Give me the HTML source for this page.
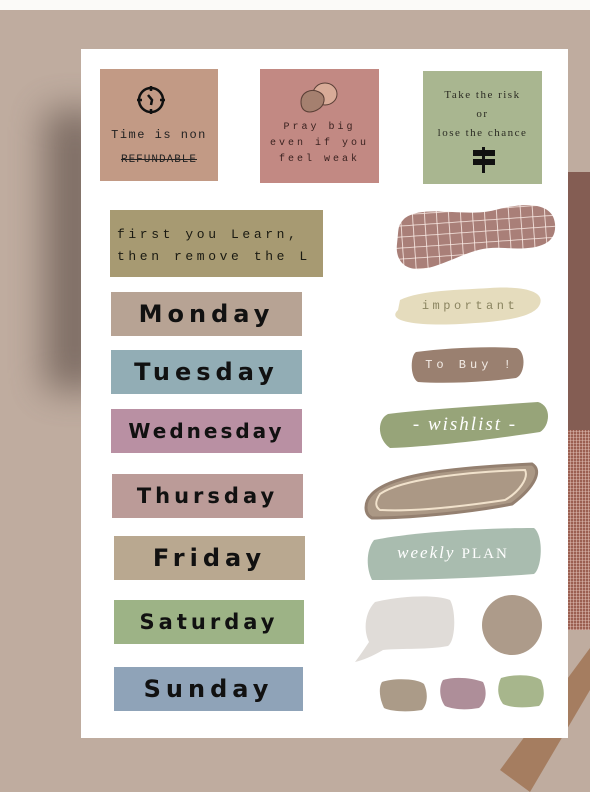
<!DOCTYPE html>
<html><head><meta charset="utf-8"><style>
*{margin:0;padding:0;box-sizing:border-box}
body{width:590px;height:792px;overflow:hidden;background:#bfac9f;position:relative;font-family:"Liberation Sans",sans-serif}
.abs{position:absolute}
.day{position:absolute;height:44px;font-weight:900;font-size:24px;letter-spacing:5px;color:#111;display:flex;align-items:center;justify-content:center;font-family:"DejaVu Sans","Liberation Sans",sans-serif}
.hand{font-family:"Liberation Mono",monospace}
</style></head><body>
<div class="abs" style="left:0;top:0;width:590px;height:10px;background:#fbfaf8"></div>
<div class="abs" style="left:45px;top:110px;width:60px;height:280px;background:#6e5e56;filter:blur(18px);opacity:.8"></div>
<div class="abs" style="left:567px;top:172px;width:23px;height:260px;background:#845d53"></div>
<div class="abs" style="left:567px;top:430px;width:23px;height:200px;background:#9b5f51;background-image:repeating-linear-gradient(90deg,rgba(230,200,190,.5) 0 1px,transparent 1px 3px),repeating-linear-gradient(0deg,rgba(230,200,190,.4) 0 1px,transparent 1px 3px)"></div>
<svg class="abs" style="left:0;top:0" width="590" height="792"><polygon points="590,648 590,690 530,792 500,770" fill="#a57d60"/></svg>
<div class="abs" style="left:81px;top:49px;width:487px;height:689px;background:#fff"></div>

<div class="abs" style="left:100px;top:69px;width:118px;height:112px;background:#c29a85"></div>
<svg class="abs" style="left:135px;top:84px" width="32" height="32"><circle cx="16" cy="16" r="12" fill="none" stroke="#111" stroke-width="2.5"/><path d="M16 2v5M16 25v5M2 16h5M25 16h5M13 11l4 5-1 5" stroke="#111" stroke-width="2.5" fill="none"/></svg>
<div class="abs hand" style="left:100px;top:128px;width:118px;text-align:center;font-size:12px;letter-spacing:1.5px;color:#222">Time is non</div>
<div class="abs hand" style="left:100px;top:154px;width:118px;text-align:center;font-size:11px;letter-spacing:1px;color:#222;text-decoration:line-through">REFUNDABLE</div>

<div class="abs" style="left:260px;top:69px;width:119px;height:114px;background:#c28983"></div>
<svg class="abs" style="left:295px;top:80px" width="48" height="40"><ellipse cx="30" cy="14" rx="12" ry="11" fill="#d8ab98" stroke="#5a3f36"/><path d="M6 22c0-10 10-14 18-10s6 14-2 18-16 2-16-8z" fill="#a5806f" stroke="#5a3f36"/></svg>
<div class="abs hand" style="left:260px;top:120px;width:119px;text-align:center;font-size:10px;line-height:16px;letter-spacing:3px;color:#3a2220">Pray big<br>even if you<br>feel weak</div>

<div class="abs" style="left:423px;top:71px;width:119px;height:113px;background:#a9b690"></div>
<div class="abs" style="left:423px;top:86px;width:119px;text-align:center;font-family:'Liberation Serif',serif;font-size:11px;line-height:19px;letter-spacing:1.5px;color:#2c2c24">Take the risk<br>or<br>lose the chance</div>
<svg class="abs" style="left:470px;top:147px" width="28" height="28"><rect x="3" y="3" width="22" height="6" fill="#111"/><rect x="3" y="12" width="22" height="6" fill="#111"/><rect x="12" y="0" width="3" height="26" fill="#111"/></svg>

<div class="abs" style="left:110px;top:210px;width:213px;height:67px;background:#a79a72"></div>
<div class="abs hand" style="left:117px;top:224px;font-size:13px;line-height:22px;letter-spacing:3.6px;color:#1a1a12;white-space:nowrap">first you Learn,<br>then remove the L</div>

<div class="day" style="left:111px;top:292px;width:191px;background:#b7a394">Monday</div>
<div class="day" style="left:111px;top:350px;width:191px;background:#92adb5">Tuesday</div>
<div class="day" style="left:111px;top:409px;width:191px;background:#b990a3;font-size:20px;letter-spacing:3px">Wednesday</div>
<div class="day" style="left:112px;top:474px;width:191px;background:#bb9b98;font-size:21px;letter-spacing:4px">Thursday</div>
<div class="day" style="left:114px;top:536px;width:191px;background:#b9a890">Friday</div>
<div class="day" style="left:114px;top:600px;width:190px;background:#9db386;font-size:21px;letter-spacing:4px">Saturday</div>
<div class="day" style="left:114px;top:667px;width:189px;background:#8fa3b8">Sunday</div>

<svg class="abs" style="left:0;top:0" width="590" height="792">
<defs><pattern id="g" width="12" height="11" patternUnits="userSpaceOnUse" patternTransform="rotate(-4)"><rect width="12" height="11" fill="#a97f78"/><path d="M0 0h12M0 0v11" stroke="#fbece6" stroke-width="1.6"/></pattern></defs>
<path d="M405 218c20-14 60 0 90-8s58-8 60 14-20 26-50 24-40 8-70 18-40-6-38-22 0-18 8-26z" fill="url(#g)"/>
<path d="M400 300c20-10 60-10 90-12s55 2 50 16-40 18-80 20-75-2-62-14z" fill="#e5dcbd"/>
<path d="M416 352c30-4 70-6 100-4 10 2 10 26 0 30-30 4-70 6-98 4-8-4-8-26-2-30z" fill="#9a8070"/>
<path d="M388 414c30-4 90-8 150-12 14 4 12 24 2 30-40 6-100 14-150 16-12-8-14-28-2-34z" fill="#97a479"/>
<path d="M372 494c20-20 80-26 160-30 10 6 4 22-20 40-40 8-100 14-140 14-8-4-8-16 0-24z" fill="#ab9885" stroke="#948070" stroke-width="3"/>
<path d="M380 494c20-14 80-22 145-24 4 8-6 22-20 30-40 6-90 12-125 10-6-4-4-10 0-16z" fill="none" stroke="#f1e2cc" stroke-width="2"/>
<path d="M374 540c40-8 110-12 160-12 10 8 8 40 0 46-50 4-110 6-162 6-6-12-6-30 2-40z" fill="#a9bcaf"/>
<path d="M375 602c25-6 60-8 75-2 6 10 6 40-2 46-20 4-45 2-65 4-10 6-20 10-28 12 6-8 10-14 14-20-6-12-4-30 6-40z" fill="#e0dcd8"/>
<circle cx="512" cy="625" r="30" fill="#ad9b8a"/>
<path d="M382 682c10-4 35-4 42 2 4 8 4 20-2 26-12 2-30 2-38-2-4-8-6-20-2-26z" fill="#ab9b88"/>
<path d="M443 680c12-4 30-2 40 2 4 8 4 20-4 26-12 2-24 2-34-2-6-8-6-20-2-26z" fill="#ae8e99"/>
<path d="M501 678c12-4 32-4 40 2 4 10 4 20-2 26-14 2-28 2-36-2-6-8-6-18-2-26z" fill="#a7b68c"/>
</svg>
<div class="abs hand" style="left:400px;top:299px;width:140px;text-align:center;font-size:12px;letter-spacing:3.5px;color:#8a8460">important</div>
<div class="abs hand" style="left:415px;top:358px;width:110px;text-align:center;font-size:12px;letter-spacing:4px;color:#f3ece6">To Buy !</div>
<div class="abs" style="left:385px;top:414px;width:160px;text-align:center;font-family:'Liberation Serif',serif;font-style:italic;font-size:19px;letter-spacing:2px;color:#fff">- wishlist -</div>
<div class="abs" style="left:378px;top:543px;width:150px;text-align:center;font-family:'Liberation Serif',serif;font-style:italic;font-size:17px;letter-spacing:2px;color:#fff">weekly <span style="font-style:normal;font-size:15px">PLAN</span></div>
</body></html>
